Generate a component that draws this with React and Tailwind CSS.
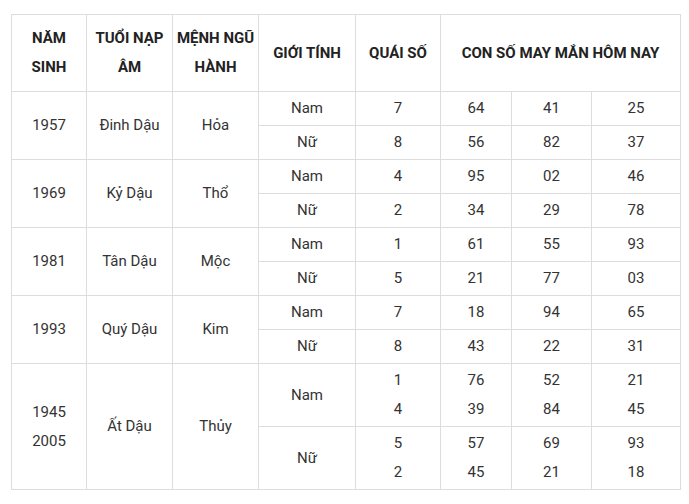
const rows = [
  { year: '1957', tuoi: 'Đinh Dậu', menh: 'Hỏa', nam: ['7', '64', '41', '25'], nu: ['8', '56', '82', '37'] },
  { year: '1969', tuoi: 'Kỷ Dậu', menh: 'Thổ', nam: ['4', '95', '02', '46'], nu: ['2', '34', '29', '78'] },
  { year: '1981', tuoi: 'Tân Dậu', menh: 'Mộc', nam: ['1', '61', '55', '93'], nu: ['5', '21', '77', '03'] },
  { year: '1993', tuoi: 'Quý Dậu', menh: 'Kim', nam: ['7', '18', '94', '65'], nu: ['8', '43', '22', '31'] },
];

const td = 'border border-[#dddddd] p-0 text-center align-middle';
const th = 'border border-[#dddddd] p-0 text-center align-middle font-bold text-[#222222]';

export default function App() {
  return (
    <div className="bg-white w-[689px] h-[504px] pl-[11px] pt-[14px] font-['Roboto',sans-serif] text-[15px] leading-[29px] text-[#333333]">
      <table className="table-fixed border-collapse w-[669px]">
        <colgroup>
          <col className="w-[75px]" />
          <col className="w-[86px]" />
          <col className="w-[86px]" />
          <col className="w-[97px]" />
          <col className="w-[85px]" />
          <col className="w-[71px]" />
          <col className="w-[80px]" />
          <col className="w-[89px]" />
        </colgroup>
        <thead>
          <tr className="h-[77px]">
            <th className={th}>NĂM<br />SINH</th>
            <th className={th}>TUỔI NẠP<br />ÂM</th>
            <th className={th}>MỆNH NGŨ<br />HÀNH</th>
            <th className={th}>GIỚI TÍNH</th>
            <th className={th}>QUÁI SỐ</th>
            <th className={th} colSpan={3}>CON SỐ MAY MẮN HÔM NAY</th>
          </tr>
        </thead>
        <tbody>
          {rows.map((r) => (
            <>
              <tr key={r.year + 'a'} className="h-[34px]">
                <td className={td} rowSpan={2}>{r.year}</td>
                <td className={td} rowSpan={2}>{r.tuoi}</td>
                <td className={td} rowSpan={2}>{r.menh}</td>
                <td className={td}>Nam</td>
                {r.nam.map((v, i) => (
                  <td key={i} className={td}>{v}</td>
                ))}
              </tr>
              <tr key={r.year + 'b'} className="h-[34px]">
                <td className={td}>Nữ</td>
                {r.nu.map((v, i) => (
                  <td key={i} className={td}>{v}</td>
                ))}
              </tr>
            </>
          ))}
          <tr className="h-[63px]">
            <td className={td} rowSpan={2}>1945<br />2005</td>
            <td className={td} rowSpan={2}>Ất Dậu</td>
            <td className={td} rowSpan={2}>Thủy</td>
            <td className={td}>Nam</td>
            <td className={td}>1<br />4</td>
            <td className={td}>76<br />39</td>
            <td className={td}>52<br />84</td>
            <td className={td}>21<br />45</td>
          </tr>
          <tr className="h-[63px]">
            <td className={td}>Nữ</td>
            <td className={td}>5<br />2</td>
            <td className={td}>57<br />45</td>
            <td className={td}>69<br />21</td>
            <td className={td}>93<br />18</td>
          </tr>
        </tbody>
      </table>
    </div>
  );
}
